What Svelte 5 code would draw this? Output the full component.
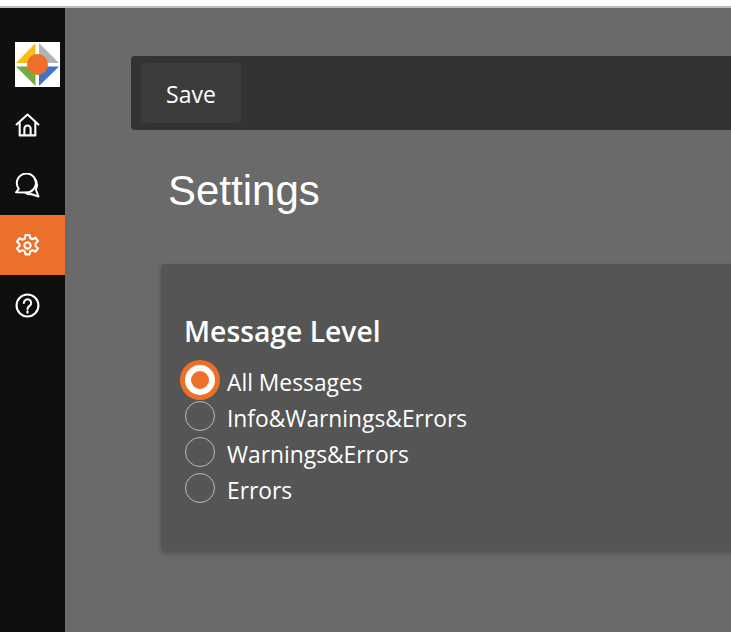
<script>
	const levels = ['All Messages', 'Info&Warnings&Errors', 'Warnings&Errors', 'Errors'];
	let level = $state('All Messages');
</script>

<div class="top"></div>
<div class="shell">
	<nav class="side">
		<svg class="logo" viewBox="0 0 45 45" aria-label="logo">
			<rect width="45" height="45" fill="#fff" />
			<polygon points="1,21 20.500,1 20.500,21" fill="#fbbc1b" />
			<polygon points="24,1 44,21 24,21" fill="#b3b3b3" />
			<polygon points="1,24.500 20.500,24.500 20.500,44" fill="#70ad47" />
			<polygon points="24,24.500 44,24.500 24,44" fill="#4472c4" />
			<circle cx="22.5" cy="22.5" r="10.5" fill="#ec7029" />
		</svg>
		<a class="item" href="#home" aria-label="Home">
			<svg viewBox="0 0 24 24"><path d="M1.500 11 12 1.500 22.500 11M4.500 9v12.500h15V9M9 21.500v-6.500a3 3 0 0 1 6 0v6.500" /></svg>
		</a>
		<a class="item" href="#messages" aria-label="Messages">
			<svg viewBox="0 0 25 25"><path d="M3.800 15.800A9.500 9.500 0 1 1 10.500 19.500L1 19.300z" /><path d="M19.800 6A9.500 9.500 0 0 1 20.800 16.500L23.500 23.500 16 21C14 21.500 12 21 10.500 19.500" /></svg>
		</a>
		<a class="item active" href="#settings" aria-label="Settings">
			<svg viewBox="0 0 24 24"><circle cx="12" cy="12" r="3" /><path d="M10 2h4l.7 3 2.300 1 2.700-1.500 2.300 3.300-2.300 2.200v2.500l2.300 2.200-2.300 3.300-2.700-1.500-2.300 1-.7 3h-4l-.7-3-2.300-1-2.700 1.500-2.300-3.300 2.300-2.200V10.500L2 8.300l2.300-3.300L7 6.500l2.300-1z" /></svg>
		</a>
		<a class="item" href="#help" aria-label="Help">
			<svg viewBox="0 0 24 24"><circle cx="12" cy="12" r="10.500" /><path d="M8.500 9.500a3.500 3.500 0 1 1 5.500 2.900c-1.300.9-2 1.500-2 3" /><path d="M12 17.500v1.500" /></svg>
		</a>
	</nav>
	<main class="content">
		<div class="toolbar">
			<button class="save">Save</button>
		</div>
		<h1>Settings</h1>
		<section class="card">
			<h2>Message Level</h2>
			<div class="options">
				{#each levels as l}
					<label class="option">
						<input type="radio" name="level" value={l} bind:group={level} />
						<span>{l}</span>
					</label>
				{/each}
			</div>
		</section>
	</main>
</div>

<style>
	:global(body) {
		overflow: hidden;
		background: #fff;
		font-family: "Open Sans", "Noto Sans", sans-serif;
	}

	.top {
		height: 6px;
		background: #fff;
		border-bottom: 2px solid #bdbdbd;
	}

	.shell {
		display: flex;
		height: 624px;
		background: #6a6a6a;
	}

	.side {
		width: 65px;
		flex: none;
		background: #0f0f0f;
		display: flex;
		flex-direction: column;
		align-items: stretch;
		padding-top: 34px;
		box-sizing: border-box;
	}

	.logo {
		width: 45px;
		height: 45px;
		margin: 0 0 8px 15px;
		display: block;
	}

	.item {
		height: 60px;
		display: flex;
		align-items: center;
		padding-left: 15px;
		box-sizing: border-box;
	}

	.item.active {
		background: #ec7029;
	}

	.item svg {
		width: 25px;
		height: 25px;
		fill: none;
		stroke: #fff;
		stroke-width: 2;
		stroke-linejoin: round;
		stroke-linecap: round;
	}

	.content {
		flex: 1;
		min-width: 0;
		padding: 48px 0 0 66px;
		overflow: hidden;
	}

	.toolbar {
		background: #333;
		height: 74px;
		width: 700px;
		border-radius: 4px 0 0 4px;
		padding: 7px 10px;
		box-sizing: border-box;
	}

	.save {
		width: 100px;
		height: 60px;
		border: none;
		border-radius: 4px;
		background: #3c3c3c;
		color: #fff;
		font: 23px "Open Sans", sans-serif;
		padding: 2px 0 0;
	}

	h1 {
		margin: 36px 0 0 37px;
		font: 400 42px/50px "Liberation Sans", Arial, sans-serif;
		color: #fff;
	}

	.card {
		margin: 48px 0 0 30px;
		width: 700px;
		height: 287px;
		box-sizing: border-box;
		background: #555;
		border-radius: 4px 0 0 4px;
		box-shadow: 0 2px 4px rgba(0, 0, 0, 0.25);
		padding: 49px 0 0 24px;
		color: #fff;
	}

	h2 {
		margin: 0 0 13px -1px;
		font: 600 28.300px/36px "Open Sans", sans-serif;
	}

	.options {
		display: flex;
		flex-direction: column;
	}

	.option {
		display: flex;
		align-items: center;
		height: 36px;
		gap: 12px;
		font-size: 22.8px;
	}

	.option span {
		padding-top: 4px;
	}

	input {
		appearance: none;
		width: 30px;
		height: 30px;
		margin: 0;
		box-sizing: border-box;
		border: 1px solid #bbb;
		border-radius: 50%;
		background: transparent;
		flex: none;
	}

	input:checked {
		background: #ec7029;
		border: 6px solid #fff;
		box-shadow: 0 0 0 5px #ec7029;
	}
</style>
